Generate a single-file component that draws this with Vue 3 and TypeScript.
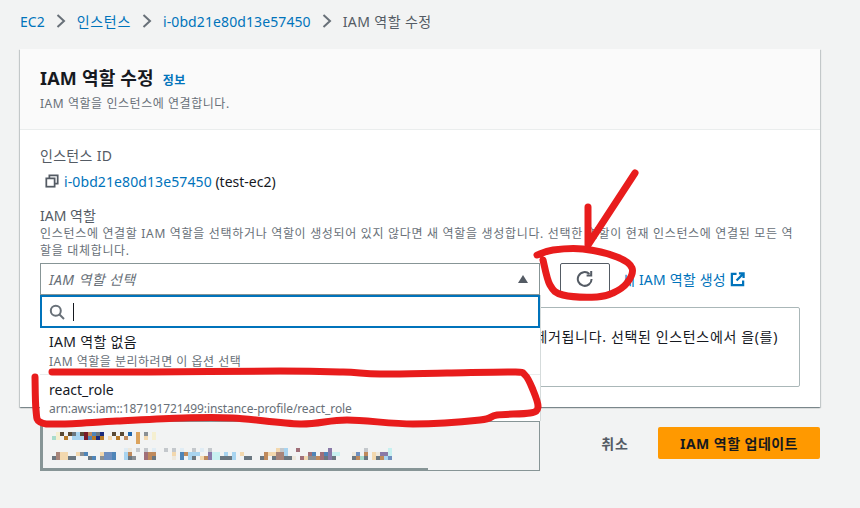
<template>
  <div class="page">
    <nav class="crumbs">
      <a class="link">EC2</a>
      <svg class="sep" viewBox="0 0 12 16"><path d="M2.5 2l6.5 6-6.5 6" /></svg>
      <a class="link ko">인스턴스</a>
      <svg class="sep" viewBox="0 0 12 16"><path d="M2.5 2l6.5 6-6.5 6" /></svg>
      <a class="link id">i-0bd21e80d13e57450</a>
      <svg class="sep" viewBox="0 0 12 16"><path d="M2.5 2l6.5 6-6.5 6" /></svg>
      <span class="current">IAM 역할 수정</span>
    </nav>

    <section class="card">
      <header class="card-head">
        <h1>IAM 역할 수정 <a class="info">정보</a></h1>
        <p>IAM 역할을 인스턴스에 연결합니다.</p>
      </header>
      <div class="card-body">
        <div class="label">인스턴스 ID</div>
        <div class="instance">
          <svg class="copy" viewBox="0 0 16 16">
            <path d="M5 4.5V1.5h9.5v9.5h-3" />
            <rect x="1.5" y="5" width="9.5" height="9.5" />
          </svg>
          <a class="link id">i-0bd21e80d13e57450</a>
          <span>&nbsp;(test-ec2)</span>
        </div>

        <div class="label role-label">IAM 역할</div>
        <p class="hint">인스턴스에 연결할 IAM 역할을 선택하거나 역할이 생성되어 있지 않다면 새 역할을 생성합니다. 선택한 역할이 현재 인스턴스에 연결된 모든 역할을 대체합니다.</p>

        <div class="picker">
          <div class="select-wrap">
            <div class="select">
              <span>IAM 역할 선택</span>
              <i class="caret-up"></i>
            </div>
            <div class="dropdown">
              <div class="search">
                <svg class="search-icon" viewBox="0 0 16 16">
                  <circle cx="6.8" cy="6.8" r="5" />
                  <path d="M10.5 10.5l4.5 4.5" />
                </svg>
                <i class="cursor"></i>
              </div>
              <div class="option none">
                <div class="opt-name">IAM 역할 없음</div>
                <div class="opt-desc">IAM 역할을 분리하려면 이 옵션 선택</div>
              </div>
              <div class="option">
                <div class="opt-name">react_role</div>
                <div class="opt-desc arn">arn:aws:iam::187191721499:instance-profile/react_role</div>
              </div>
            </div>
          </div>
          <button class="refresh">
            <svg viewBox="0 0 18 18">
              <path d="M15.6 8.9a6.9 6.9 0 1 1-2.2-5" />
              <path d="M15.2 1v4.6h-4.6" />
            </svg>
          </button>
          <a class="link create">새 IAM 역할 생성</a>
          <svg class="external" viewBox="0 0 16 16">
            <path d="M7 2H2v12h12V9" />
            <path d="M9.5 1.5h5v5M14 2L7 9" />
          </svg>
        </div>

        <div class="notice">선택된 인스턴스에서 IAM 역할 없음을 선택하면 연결된 역할이 제거됩니다. 선택된 인스턴스에서 을(를)</div>
      </div>
    </section>

    <footer class="foot">
      <div class="blurred">
        <svg width="396" height="40" viewBox="0 0 396 40">
          <rect v-for="(c, i) in cells" :key="i" :x="c.x" :y="c.y" width="4" height="4" :fill="c.fill" shape-rendering="crispEdges" />
        </svg>
        <i class="blurred-edge"></i>
      </div>
      <div class="actions">
        <button class="cancel">취소</button>
        <button class="primary">IAM 역할 업데이트</button>
      </div>
    </footer>

    <svg class="scribble" width="860" height="508" viewBox="0 0 860 508">
      <path v-for="(d, i) in strokes" :key="i" :d="d" />
    </svg>
  </div>
</template>

<script setup lang="ts">
// mosaic of the pasted, pixelated block: one letter per 4px square
const palette: Record<string, string> = {
  a: '#5a4a35', b: '#b87a28', c: '#f5efd0', d: '#6b7780', e: '#a8d4f0', f: '#7a1a28',
  g: '#4f85b8', h: '#1a2a7c', i: '#dca45e', j: '#a8dccc', k: '#f3d8ae', l: '#c08a5c',
  m: '#1f66ac', n: '#a8857a', o: '#8a7aa8', p: '#c8f0f0', q: '#c4c8cc', r: '#6f8fbf',
  s: '#a06f78', t: '#8a8f94', u: '#e0ecf4', v: '#eee8dc',
};

const rows: [number, number, string][] = [
  [0, 8, '...ca.adeaflgdh..a.a.m.i.t.c'],
  [0, 12, '..jc.b.eeefgbhb.k.b.l..i.k.c'],
  [0, 16, '.......................i'],
  [0, 24, '....................uv.q.q.u..q.q.u..q.u.q'],
  [0, 28, '...nkk..ktg...krrg..el...sll....k.gleee..opp'],
  [0, 32, '..dnkkdd...dg.trrg..edt..sld....v.g.ed.kloppd'],
  [176, 24, '..............kqe..s.......o........q.....p'],
  [176, 28, '.e.e.k.....lkknne.....sg.sgopp...vr.l.kvoop'],
  [176, 32, 'ddde..dd..dl.dnnddv.skttlsdod....dljd.kdler'],
];

const cells = rows.flatMap(([x0, y, line]) =>
  [...line].flatMap((ch, i) => (ch === '.' ? [] : [{ x: x0 + i * 4, y, fill: palette[ch] }])),
);

type Pt = [number, number];

// hand-drawn red marks, smoothed through the sampled points
function smooth(pts: Pt[]): string {
  let d = `M${pts[0][0]} ${pts[0][1]}`;
  for (let i = 0; i < pts.length - 1; i++) {
    const a = pts[i - 1] ?? pts[i];
    const b = pts[i];
    const c = pts[i + 1];
    const e = pts[i + 2] ?? c;
    d += `C${b[0] + (c[0] - a[0]) / 6} ${b[1] + (c[1] - a[1]) / 6} ${c[0] - (e[0] - b[0]) / 6} ${c[1] - (e[1] - b[1]) / 6} ${c[0]} ${c[1]}`;
  }
  return d;
}

const strokes = [
  'M588 207L588 245L635 173',
  smooth([[537, 255], [553, 250], [583, 249], [617, 257], [632, 268], [627, 283], [613, 293], [597, 297], [563, 295], [550, 285], [543, 260]]),
  smooth([
    [52, 372], [150, 372], [280, 371], [343, 372], [380, 374], [447, 373], [513, 372], [525, 375], [533, 390], [538, 407],
    [530, 413], [497, 415], [480, 420], [413, 424], [347, 420], [300, 424], [233, 418], [183, 418], [117, 421], [60, 424],
    [40, 422], [36, 410], [35, 377],
  ]),
];
</script>

<style scoped>
.page {
  position: relative;
  width: 860px;
  height: 508px;
  overflow: hidden;
  padding: 0 40px 0 20px;
  box-sizing: border-box;
  background: #f2f3f3;
  color: #16191f;
  font-family: "Noto Sans", "Noto Sans CJK KR", sans-serif;
  font-size: 14px;
}

.link {
  color: #0073bb;
}

.ko {
  letter-spacing: 0.7px;
}

.id {
  letter-spacing: 0.1px;
}

.crumbs {
  display: flex;
  align-items: center;
  height: 42px;
  font-size: 14px;
  white-space: nowrap;
}

.sep {
  width: 12px;
  height: 16px;
  margin: 0 10px;
  fill: none;
  stroke: #687078;
  stroke-width: 2;
}

.current {
  color: #545b64;
  letter-spacing: 0.4px;
}

.card {
  height: 358px;
  margin-top: 7px;
  background: #fff;
  box-shadow: 0 1px 1px 0 rgba(0, 28, 36, 0.3), 1px 1px 1px 0 rgba(0, 28, 36, 0.15), -1px 1px 1px 0 rgba(0, 28, 36, 0.15);
}

.card-head {
  height: 81px;
  box-sizing: border-box;
  padding: 16px 20px 0;
  background: #fafafa;
  border-bottom: 1px solid #eaeded;
}

.card-head h1 {
  margin: 0;
  font-size: 18px;
  line-height: 26px;
  font-weight: 700;
  letter-spacing: 0.2px;
}

.info {
  margin-left: 4px;
  color: #0073bb;
  font-size: 12px;
  font-weight: 700;
  letter-spacing: 0.5px;
}

.card-head p {
  margin: 1px 0 0;
  font-size: 12px;
  line-height: 18px;
  color: #687078;
  letter-spacing: 0.55px;
}

.card-body {
  padding: 16px 20px;
}

.label {
  line-height: 20px;
  color: #545b64;
  letter-spacing: 0.3px;
}

.instance {
  display: flex;
  align-items: center;
  height: 20px;
  margin-top: 5px;
  padding-left: 5px;
}

.copy {
  width: 14px;
  height: 14px;
  margin-right: 5px;
  fill: none;
  stroke: #545b64;
  stroke-width: 2;
}

.role-label {
  margin-top: 15px;
  letter-spacing: 0;
}

.hint {
  margin: -1px 0 0;
  font-size: 12px;
  line-height: 17px;
  color: #687078;
  letter-spacing: 0.68px;
}

.picker {
  display: flex;
  align-items: center;
  margin-top: 4px;
  height: 32px;
}

.select-wrap {
  position: relative;
  width: 500px;
  flex: none;
}

.select {
  display: flex;
  align-items: center;
  justify-content: space-between;
  height: 32px;
  box-sizing: border-box;
  padding: 0 11px 0 8px;
  border: 1px solid #879596;
  font-style: italic;
  color: #687078;
  letter-spacing: 0.4px;
}

.caret-up {
  width: 0;
  height: 0;
  border-left: 5px solid transparent;
  border-right: 5px solid transparent;
  border-bottom: 8px solid #545b64;
}

.dropdown {
  position: absolute;
  z-index: 2;
  top: 32px;
  left: 0;
  width: 501px;
  height: 126px;
  background: #fff;
  border-right: 1px solid #d5dbdb;
  box-sizing: border-box;
}

.search {
  display: flex;
  align-items: center;
  height: 33px;
  box-sizing: border-box;
  padding-left: 7px;
  border: 2px solid #0073bb;
}

.search-icon {
  width: 16px;
  height: 16px;
  fill: none;
  stroke: #687078;
  stroke-width: 2;
}

.cursor {
  width: 1px;
  height: 18px;
  margin-left: 8px;
  background: #16191f;
}

.option {
  height: 46px;
  box-sizing: border-box;
  padding: 5px 9px 0;
}

.option.none {
  height: 47px;
  padding-top: 4px;
  border-bottom: 1px solid #eaeded;
  letter-spacing: 0.3px;
}

.opt-name {
  line-height: 19px;
}

.opt-desc {
  margin-top: 1px;
  font-size: 12px;
  line-height: 17px;
  color: #687078;
}

.none .opt-desc {
  margin-top: 2px;
  letter-spacing: 0.5px;
}

.arn {
  letter-spacing: -0.1px;
}

.refresh {
  display: flex;
  align-items: center;
  justify-content: center;
  width: 50px;
  height: 32px;
  margin-left: 20px;
  padding: 0;
  background: #fff;
  border: 1px solid #545b64;
  border-radius: 2px;
}

.refresh svg {
  width: 18px;
  height: 18px;
  fill: none;
  stroke: #545b64;
  stroke-width: 2;
}

.create {
  margin-left: 12px;
  white-space: nowrap;
  letter-spacing: 0.2px;
}

.external {
  width: 15px;
  height: 15px;
  margin-left: 4px;
  fill: none;
  stroke: #0073bb;
  stroke-width: 2.4;
}

.notice {
  height: 80px;
  box-sizing: border-box;
  margin-top: 12px;
  padding: 18px 21px 0;
  border: 1px solid #aab7b8;
  border-radius: 2px;
  white-space: nowrap;
  overflow: hidden;
  text-align: right;
  letter-spacing: 0.65px;
}

.foot {
  display: flex;
  justify-content: space-between;
  padding-left: 20px;
  margin-top: 14px;
}

.blurred {
  position: relative;
  width: 500px;
  height: 50px;
  box-sizing: border-box;
  border: 1px solid #879596;
  border-left-width: 3px;
}

.blurred svg {
  display: block;
  margin-left: 1px;
  margin-top: 2px;
}

.blurred-edge {
  position: absolute;
  left: 0;
  bottom: 0;
  width: 385px;
  height: 2px;
  background: #879596;
}

.actions {
  display: flex;
  align-items: center;
  height: 32px;
  margin-top: 6px;
}

button {
  font-family: inherit;
}

.cancel {
  margin-right: 29px;
  padding: 0;
  background: none;
  border: 0;
  font-size: 14px;
  font-weight: 700;
  color: #545b64;
  letter-spacing: 1px;
}

.primary {
  width: 162px;
  height: 32px;
  padding: 0;
  background: #ff9900;
  border: 0;
  border-radius: 2px;
  font-size: 14px;
  font-weight: 700;
  color: #16191f;
  letter-spacing: 0.45px;
}

.scribble {
  position: absolute;
  z-index: 3;
  top: 0;
  left: 0;
  fill: none;
  stroke: #e81c1c;
  stroke-width: 7;
  stroke-linecap: round;
  stroke-linejoin: round;
}
</style>
